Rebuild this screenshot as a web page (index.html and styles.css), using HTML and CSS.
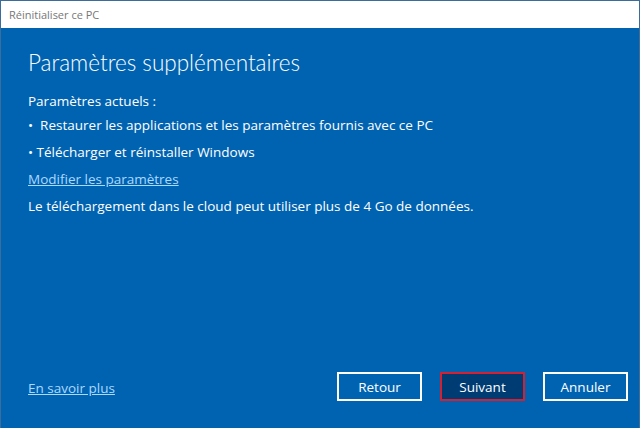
FILE: index.html
```html
<!DOCTYPE html>
<html lang="fr">
<head>
    <meta charset="UTF-8">
    <title>Réinitialiser ce PC</title>
    <link rel="stylesheet" href="styles.css">
</head>
<body>
    <div class="window">
        <div class="titlebar">Réinitialiser ce PC</div>
        <div class="content">
            <h1>Paramètres supplémentaires</h1>
            <p class="current">Paramètres actuels :</p>
            <p class="item">•&nbsp;&nbsp;Restaurer les applications et les paramètres fournis avec ce PC</p>
            <p class="item">• Télécharger et réinstaller Windows</p>
            <p class="item"><a href="#" class="link">Modifier les paramètres</a></p>
            <p class="item">Le téléchargement dans le cloud peut utiliser plus de 4 Go de données.</p>
        </div>
        <div class="footer">
            <a href="#" class="link">En savoir plus</a>
            <div class="buttons">
                <button class="btn">Retour</button>
                <button class="btn primary">Suivant</button>
                <button class="btn">Annuler</button>
            </div>
        </div>
    </div>
</body>
</html>
```

FILE: styles.css
```css
html, body {
    margin: 0;
    padding: 0;
}
body {
    font-family: "Open Sans", "Noto Sans", sans-serif;
    background-color: #0063b1;
}
.window {
    width: 640px;
    height: 428px;
    box-sizing: border-box;
    border: 1px solid #3a6d9c;
    border-bottom: none;
    display: flex;
    flex-direction: column;
    background-color: #0063b1;
    color: #fff;
}
.titlebar {
    height: 27px;
    flex: none;
    background-color: #fff;
    color: #777;
    font-size: 11px;
    line-height: 28px;
    padding-left: 8px;
}
.content {
    flex: 1;
    padding: 19px 0 0 27px;
}
h1 {
    margin: 0 0 12px;
    font-family: Lato, "Open Sans", sans-serif;
    font-weight: 300;
    font-size: 22.5px;
    line-height: 32px;
}
p {
    margin: 0;
    font-size: 13.5px;
    line-height: 20px;
}
.current {
    margin-bottom: 4px;
}
.item {
    margin-bottom: 7px;
}
.link {
    color: #acd9ff;
    text-decoration: underline;
    font-size: 13.5px;
}
.footer {
    height: 56px;
    flex: none;
    display: flex;
    align-items: flex-start;
    justify-content: space-between;
    padding: 0 11px 0 27px;
}
.footer > .link {
    margin-top: 7px;
}
.buttons {
    display: flex;
    gap: 18px;
}
.btn {
    width: 85px;
    height: 29px;
    box-sizing: border-box;
    border: 2px solid #fff;
    background-color: transparent;
    color: #fff;
    font-family: inherit;
    font-size: 13.5px;
    padding: 0;
}
.btn.primary {
    background-color: #003c74;
    border-color: #d42030;
}
```
